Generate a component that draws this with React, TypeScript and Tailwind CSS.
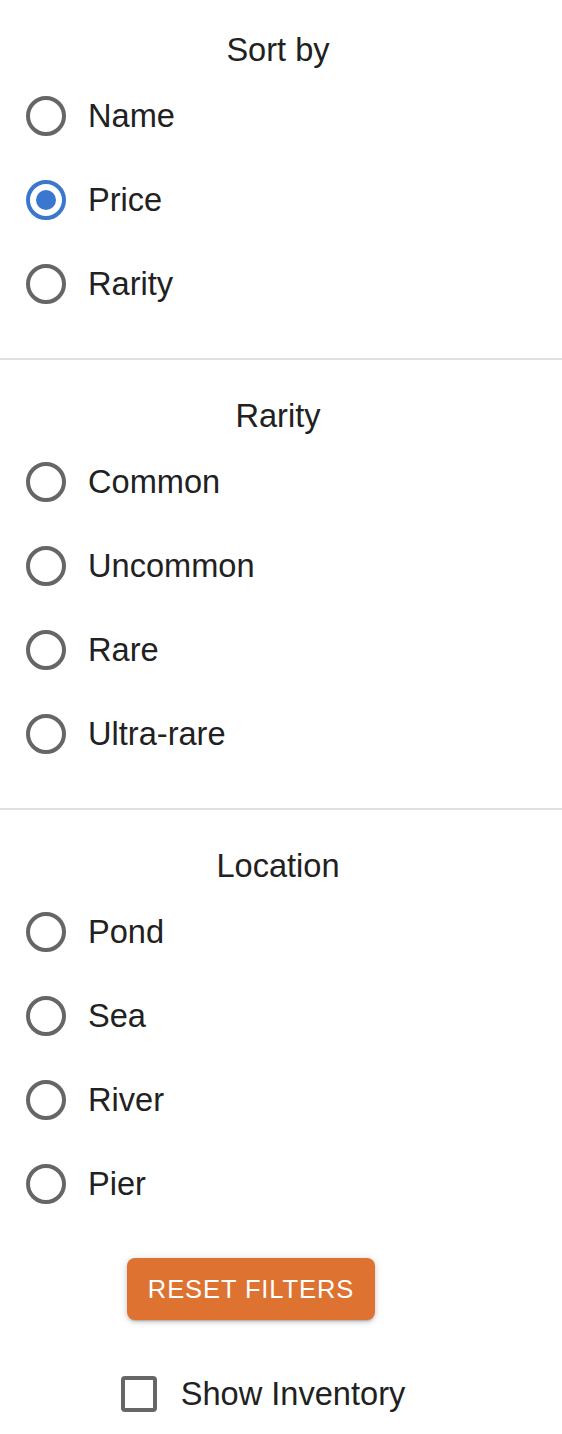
import React, { useState } from 'react';

const sortOptions = ['Name', 'Price', 'Rarity'];
const rarityOptions = ['Common', 'Uncommon', 'Rare', 'Ultra-rare'];
const locationOptions = ['Pond', 'Sea', 'River', 'Pier'];

const RadioIcon = ({ checked }: { checked: boolean }) => (
  <svg width="48" height="48" viewBox="0 0 48 48">
    <circle
      cx="24"
      cy="24"
      r="18"
      fill="none"
      stroke={checked ? '#3a77cf' : '#666666'}
      strokeWidth="4"
    />
    {checked && <circle cx="24" cy="24" r="10" fill="#3a77cf" />}
  </svg>
);

const RadioGroup = ({
  title,
  options,
  value,
  onChange,
}: {
  title: string;
  options: string[];
  value: string | null;
  onChange: (v: string) => void;
}) => (
  <div className="flex flex-col">
    <div className="mr-[6px] text-center text-[32.6px] leading-[48px] text-[#212121]">{title}</div>
    {options.map((opt) => (
      <label key={opt} className="flex h-[84px] cursor-pointer items-center pl-[4px]">
        <input
          type="radio"
          className="sr-only"
          checked={value === opt}
          onChange={() => onChange(opt)}
        />
        <span className="flex h-[84px] w-[84px] items-center justify-center">
          <RadioIcon checked={value === opt} />
        </span>
        <span className="text-[32.6px] leading-[48px] text-[#212121]">{opt}</span>
      </label>
    ))}
  </div>
);

const App = () => {
  const [sortBy, setSortBy] = useState<string | null>('Price');
  const [rarity, setRarity] = useState<string | null>(null);
  const [location, setLocation] = useState<string | null>(null);
  const [showInventory, setShowInventory] = useState(false);

  const resetFilters = () => {
    setRarity(null);
    setLocation(null);
  };

  return (
    <div className="min-h-[1434px] w-[562px] bg-white pt-[26px] font-['Liberation_Sans',Arial,sans-serif]">
      <RadioGroup title="Sort by" options={sortOptions} value={sortBy} onChange={setSortBy} />
      <hr className="my-[32px] border-t-2 border-[#e0e0e0]" />
      <RadioGroup title="Rarity" options={rarityOptions} value={rarity} onChange={setRarity} />
      <hr className="my-[32px] border-t-2 border-[#e0e0e0]" />
      <RadioGroup title="Location" options={locationOptions} value={location} onChange={setLocation} />

      {/* Bottom actions */}
      <div className="mt-[32px] flex w-[502px] flex-col items-center">
        <button
          onClick={resetFilters}
          className="h-[62px] w-[248px] rounded-[8px] bg-[#de7230] text-[25.5px] tracking-[0.9px] text-white uppercase shadow-[0_3px_2px_-2px_rgba(0,0,0,0.2),0_2px_4px_0_rgba(0,0,0,0.14),0_1px_10px_0_rgba(0,0,0,0.12)]"
        >
          Reset Filters
        </button>
        <label className="mt-[32px] flex h-[84px] cursor-pointer items-center">
          <input
            type="checkbox"
            className="sr-only"
            checked={showInventory}
            onChange={() => setShowInventory(!showInventory)}
          />
          <span className="flex h-[84px] w-[84px] items-center justify-center">
            <span
              className={
                showInventory
                  ? 'h-[36px] w-[36px] rounded-[4px] border-4 border-[#3a77cf] bg-[#3a77cf]'
                  : 'h-[36px] w-[36px] rounded-[4px] border-4 border-[#666666]'
              }
            />
          </span>
          <span className="text-[32.6px] leading-[48px] text-[#212121]">Show Inventory</span>
        </label>
      </div>
    </div>
  );
};

export default App;
